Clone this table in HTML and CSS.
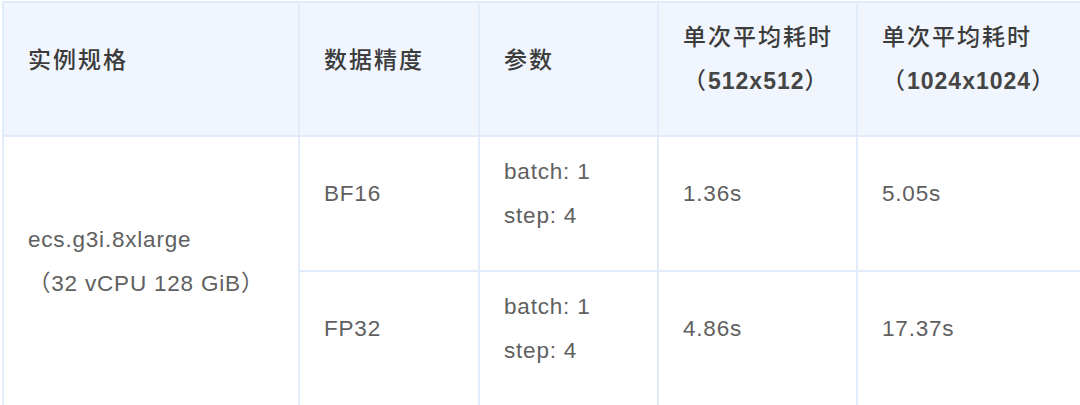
FILE: index.html
```html
<!DOCTYPE html>
<html lang="zh-CN">
<head>
<meta charset="utf-8">
<title>实例规格性能表</title>
<link rel="stylesheet" href="styles.css">
</head>
<body>
<table class="spec-table">
  <colgroup>
    <col class="c1"><col class="c2"><col class="c3"><col class="c4"><col class="c5">
  </colgroup>
  <thead>
    <tr>
      <th><p>实例规格</p></th>
      <th><p>数据精度</p></th>
      <th><p>参数</p></th>
      <th><p>单次平均耗时<br>（<span class="dim">512x512</span>）</p></th>
      <th><p>单次平均耗时<br>（<span class="dim">1024x1024</span>）</p></th>
    </tr>
  </thead>
  <tbody>
    <tr>
      <td rowspan="2"><p>ecs.g3i.8xlarge<br>（32 vCPU 128 GiB）</p></td>
      <td><p>BF16</p></td>
      <td><p>batch: 1<br>step: 4</p></td>
      <td><p>1.36s</p></td>
      <td><p>5.05s</p></td>
    </tr>
    <tr>
      <td><p>FP32</p></td>
      <td><p>batch: 1<br>step: 4</p></td>
      <td><p>4.86s</p></td>
      <td><p>17.37s</p></td>
    </tr>
  </tbody>
</table>
</body>
</html>
```
FILE: styles.css
```css
html, body {
  margin: 0;
  padding: 0;
  overflow: hidden;
  background: #ffffff;
}
body {
  padding: 1px 0 0 2px;
}
.spec-table {
  border-collapse: collapse;
  table-layout: fixed;
  width: 1130px;
  font-family: "Liberation Sans", "Noto Sans CJK SC", sans-serif;
  font-size: 22.5px;
  letter-spacing: 0.8px;
  color: #606060;
}
.c1 { width: 296px; }
.c2 { width: 180px; }
.c3 { width: 179px; }
.c4 { width: 199px; }
.c5 { width: 276px; }
.spec-table th,
.spec-table td {
  border: 2px solid #e2ebfa;
  padding: 13px 24px 12px;
  text-align: left;
  vertical-align: middle;
  line-height: 44px;
  white-space: nowrap;
}
.spec-table p {
  margin: 0 0 20px 0;
}
.spec-table thead th {
  background: #f0f5fe;
  color: #3c3c3c;
  font-weight: 500;
  font-size: 23px;
  letter-spacing: 2px;
  font-family: "Noto Sans CJK SC", sans-serif;
  padding: 10px 24px 12px;
}
.spec-table .dim {
  font-family: "Liberation Sans", sans-serif;
  font-weight: 700;
  letter-spacing: 1px;
  color: #454545;
}
```
